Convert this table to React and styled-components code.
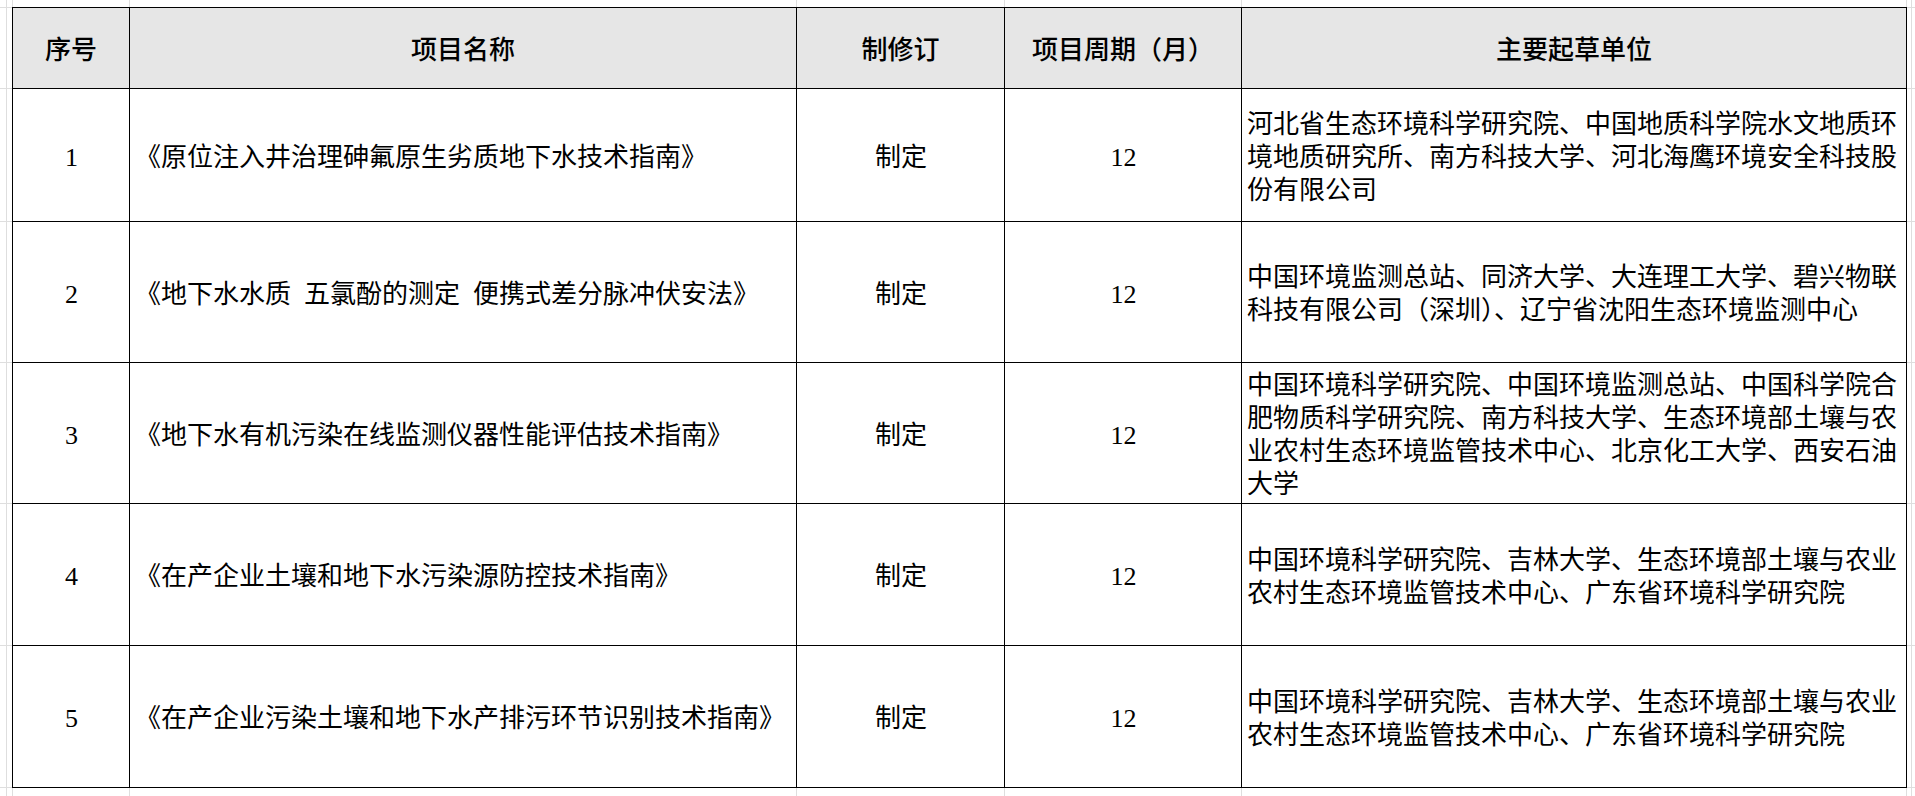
import React from 'react';
import styled, {createGlobalStyle} from 'styled-components';

const GlobalStyle = createGlobalStyle`
	html, body{
		margin: 0;
		padding: 0;
		background: #fff;
	}
	body{
		font-family: "Liberation Serif", "Noto Sans CJK SC", serif;
		color: #000;
	}
`

const columns = [
	{title: '序号', width: 117},
	{title: '项目名称', width: 667},
	{title: '制修订', width: 208},
	{title: '项目周期（月）', width: 237},
	{title: '主要起草单位', width: 665}
]

const rows = [
	{
		no: '1',
		name: '《原位注入井治理砷氟原生劣质地下水技术指南》',
		kind: '制定',
		months: '12',
		units: '河北省生态环境科学研究院、中国地质科学院水文地质环境地质研究所、南方科技大学、河北海鹰环境安全科技股份有限公司',
		height: 133
	},
	{
		no: '2',
		name: '《地下水水质\u2002五氯酚的测定\u2002便携式差分脉冲伏安法》',
		kind: '制定',
		months: '12',
		units: '中国环境监测总站、同济大学、大连理工大学、碧兴物联科技有限公司（深圳）、辽宁省沈阳生态环境监测中心',
		height: 141
	},
	{
		no: '3',
		name: '《地下水有机污染在线监测仪器性能评估技术指南》',
		kind: '制定',
		months: '12',
		units: '中国环境科学研究院、中国环境监测总站、中国科学院合肥物质科学研究院、南方科技大学、生态环境部土壤与农业农村生态环境监管技术中心、北京化工大学、西安石油大学',
		height: 141
	},
	{
		no: '4',
		name: '《在产企业土壤和地下水污染源防控技术指南》',
		kind: '制定',
		months: '12',
		units: '中国环境科学研究院、吉林大学、生态环境部土壤与农业农村生态环境监管技术中心、广东省环境科学研究院',
		height: 142
	},
	{
		no: '5',
		name: '《在产企业污染土壤和地下水产排污环节识别技术指南》',
		kind: '制定',
		months: '12',
		units: '中国环境科学研究院、吉林大学、生态环境部土壤与农业农村生态环境监管技术中心、广东省环境科学研究院',
		height: 142
	}
]

// faint spreadsheet gridlines peeking out around the table
const tableLeft = 12;
const tableTop = 7;
const colEdges = columns.reduce((acc, col) => [...acc, acc[acc.length - 1] + col.width], [tableLeft]);
const rowEdges = [81, ...rows.map(r => r.height)].reduce((acc, h) => [...acc, acc[acc.length - 1] + h], [tableTop]);
const gridColor = '#dedede';
const gridLines = [
	...colEdges.map(x => `linear-gradient(${gridColor}, ${gridColor}) ${x}px 0 / 1px 100% no-repeat`),
	...rowEdges.map(y => `linear-gradient(${gridColor}, ${gridColor}) 0 ${y}px / 100% 1px no-repeat`),
	`linear-gradient(${gridColor}, ${gridColor}) 6px 0 / 1px 100% no-repeat`,
	`linear-gradient(${gridColor}, ${gridColor}) 1911px 0 / 1px 100% no-repeat`
].join(', ');

export default function App(){
	return(
		<>
			<GlobalStyle />
			<Sheet $grid={gridLines}>
				<Table>
					<colgroup>
						{columns.map((col, index) =>
							<col key={index} style={{width: col.width}} />
						)}
					</colgroup>
					<thead>
						<HeadRow>
							{columns.map((col, index) =>
								<HeadCell key={index}>{col.title}</HeadCell>
							)}
						</HeadRow>
					</thead>
					<tbody>
						{rows.map((row) =>
							<BodyRow key={row.no} $height={row.height}>
								<Cell $align="center">{row.no}</Cell>
								<Cell $align="left">{row.name}</Cell>
								<Cell $align="center">{row.kind}</Cell>
								<Cell $align="center">{row.months}</Cell>
								<Cell $align="left">{row.units}</Cell>
							</BodyRow>
						)}
					</tbody>
				</Table>
			</Sheet>
		</>
	)
}

const Sheet = styled.div`
	padding: ${tableTop}px 0 0 ${tableLeft}px;
	width: 1915px;
	height: 796px;
	box-sizing: border-box;
	overflow: hidden;
	background: ${({$grid}) => $grid};
	background-color: #fff;
`

const Table = styled.table`
	border-collapse: collapse;
	table-layout: fixed;
	width: 1895px;
	font-size: 26px;
	line-height: 33px;
	background-color: #fff;
`

const HeadRow = styled.tr`
	height: 81px;
	background-color: #e6e6e6;
`

const HeadCell = styled.th`
	border: 1px solid #000;
	padding: 4px 5px 0;
	text-align: center;
	vertical-align: middle;
	font-weight: 500;
`

const BodyRow = styled.tr`
	height: ${({$height}) => $height}px;
`

const Cell = styled.td`
	border: 1px solid #000;
	padding: 4px 4px 0 5px;
	text-align: ${({$align}) => $align};
	vertical-align: middle;
	word-break: break-all;
`
